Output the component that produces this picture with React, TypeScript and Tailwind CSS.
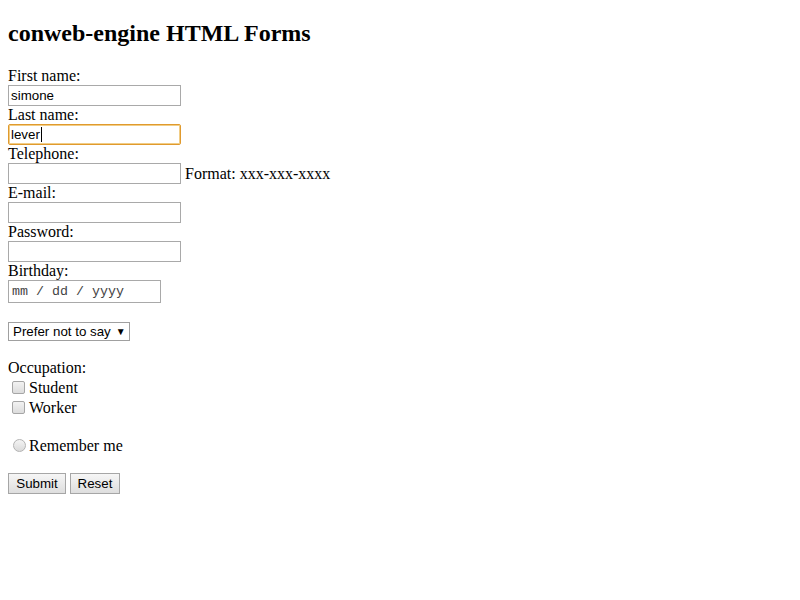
import React from "react";

const serif = "font-['Liberation_Serif',_'Times_New_Roman',serif]";
const sans = "font-['Liberation_Sans',Arial,sans-serif]";

function Label({ children }: { children: React.ReactNode }) {
  return <div className="h-[18px] leading-[18px] text-[16px] text-black">{children}</div>;
}

function Field({ value, focused }: { value?: string; focused?: boolean }) {
  if (focused) {
    return (
      <div className="h-[21px] w-[173px] rounded-[2px] border border-[#e09a2e] shadow-[inset_0_0_0_1px_#f1cd86] flex items-center pl-[2px]">
        <span className={`${sans} text-[13.33px] leading-none text-black`}>{value}</span>
        <span className="ml-[1px] h-[15px] w-[1px] bg-black" />
      </div>
    );
  }
  return (
    <div className="h-[21px] w-[173px] border border-[#a9a9a9] flex items-center pl-[2px]">
      <span className={`${sans} text-[13.33px] leading-none text-black`}>{value}</span>
    </div>
  );
}

function Checkbox() {
  return (
    <span className="ml-[4px] mr-[4px] inline-block h-[13px] w-[13px] rounded-[2px] border border-[#a6a6a6] bg-gradient-to-b from-[#f2f2f2] to-[#dcdcdc]" />
  );
}

export default function App() {
  return (
    <div className={`${serif} min-h-[600px] bg-white px-[8px] pt-[20px] text-black`}>
      <h2 className="h-[27px] text-[24px] font-bold leading-[27px]">conweb-engine HTML Forms</h2>
      <div className="mt-[20px] flex flex-col">
        <Label>First name:</Label>
        <Field value="simone" />
        <Label>Last name:</Label>
        <Field value="lever" focused />
        <Label>Telephone:</Label>
        <div className="flex h-[21px] items-end">
          <Field />
          <span className="ml-[4px] mb-[1px] text-[16px] leading-[18px]">Format: xxx-xxx-xxxx</span>
        </div>
        <Label>E-mail:</Label>
        <Field />
        <Label>Password:</Label>
        <Field />
        <Label>Birthday:</Label>
        <div className="flex h-[23px] w-[153px] items-center border border-[#a9a9a9] pl-[3px]">
          <span className="font-['Liberation_Mono','Courier_New',monospace] text-[13.33px] leading-none text-[#444]">
            mm / dd / yyyy
          </span>
        </div>
        <div className="mt-[19px] flex h-[19px] w-[122px] items-center border border-[#a0a0a0] pl-[4px]">
          <span className={`${sans} text-[13.33px] leading-none`}>Prefer not to say</span>
          <span className="ml-[5px] text-[10px] leading-none">▼</span>
        </div>
        <div className="mt-[18px]">
          <Label>Occupation:</Label>
        </div>
        <div className="flex h-[20px] items-center">
          <Checkbox />
          <span className="text-[16px] leading-[18px] pt-[2px]">Student</span>
        </div>
        <div className="flex h-[20px] items-center">
          <Checkbox />
          <span className="text-[16px] leading-[18px] pt-[2px]">Worker</span>
        </div>
        <div className="mt-[18px] flex h-[20px] items-center">
          <span className="ml-[5px] mr-[3px] inline-block h-[13px] w-[13px] rounded-full border border-[#b3b3b3] bg-gradient-to-b from-[#f4f4f4] to-[#dadada]" />
          <span className="text-[16px] leading-[18px] pt-[2px]">Remember me</span>
        </div>
        <div className="mt-[18px] flex gap-[4px]">
          <div className={`${sans} flex h-[21px] w-[58px] items-center justify-center border border-[#a6a6a6] bg-gradient-to-b from-[#f6f6f6] to-[#dedede] text-[13.33px]`}>
            Submit
          </div>
          <div className={`${sans} flex h-[21px] w-[50px] items-center justify-center border border-[#a6a6a6] bg-gradient-to-b from-[#f6f6f6] to-[#dedede] text-[13.33px]`}>
            Reset
          </div>
        </div>
      </div>
    </div>
  );
}
